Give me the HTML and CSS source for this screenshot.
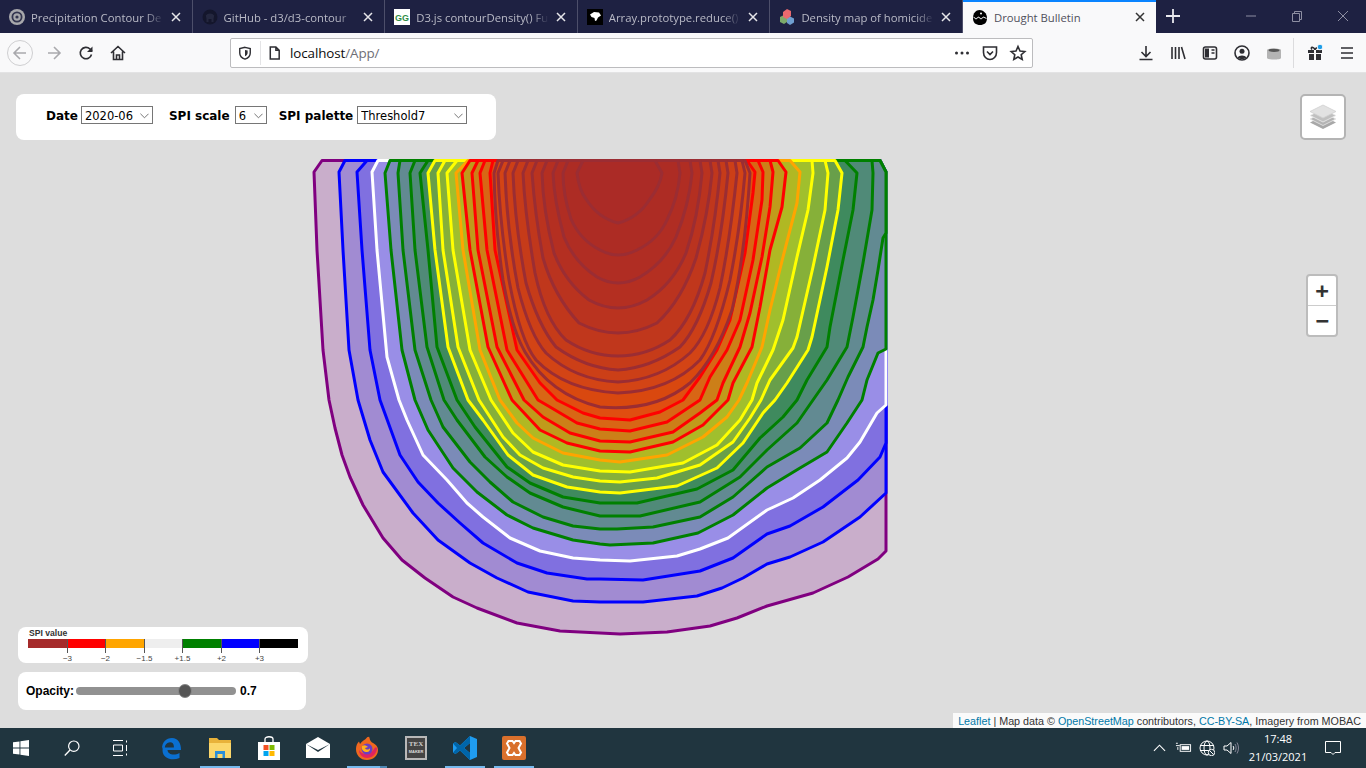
FILE: index.html
```html
<!DOCTYPE html>
<html lang="en">
<head>
<meta charset="utf-8">
<title>Drought Bulletin</title>
<link rel="stylesheet" href="styles.css">
</head>
<body>
<div class="tabstrip">
  <div class="tab">
    <svg class="fav" viewBox="0 0 16 16"><circle cx="8" cy="8" r="8" fill="#a8a8ac"/><circle cx="8" cy="8" r="4.6" fill="none" stroke="#33354f" stroke-width="1.8"/><circle cx="8" cy="8" r="1.6" fill="#33354f"/></svg>
    <span class="tab-title">Precipitation Contour De</span>
    <svg class="tab-x" viewBox="0 0 10 10"><path d="M1 1l8 8M9 1l-8 8"/></svg>
  </div>
  <div class="tab">
    <svg class="fav" viewBox="0 0 16 16"><circle cx="8" cy="8" r="7.5" fill="#14162c"/><path d="M4.5 13V10L3.800 6.500 5.500 5 8 4.500 10.500 5 12.200 6.500 11.500 10V13H9.500V10H6.500V13Z" fill="#24273f"/></svg>
    <span class="tab-title">GitHub - d3/d3-contour</span>
    <svg class="tab-x" viewBox="0 0 10 10"><path d="M1 1l8 8M9 1l-8 8"/></svg>
  </div>
  <div class="tab">
    <svg class="fav" viewBox="0 0 16 16"><rect width="16" height="16" fill="#fff"/><text x="8" y="11.500" text-anchor="middle" class="fav-gg">GG</text></svg>
    <span class="tab-title">D3.js contourDensity() Fu</span>
    <svg class="tab-x" viewBox="0 0 10 10"><path d="M1 1l8 8M9 1l-8 8"/></svg>
  </div>
  <div class="tab">
    <svg class="fav" viewBox="0 0 16 16"><rect width="16" height="16" fill="#000"/><path d="M3 5.500 7 3 12 3.500 14 6.500 11 8.500 9.500 11.500 8 12 7.500 9 4.500 8Z" fill="#fff"/></svg>
    <span class="tab-title">Array.prototype.reduce()</span>
    <svg class="tab-x" viewBox="0 0 10 10"><path d="M1 1l8 8M9 1l-8 8"/></svg>
  </div>
  <div class="tab">
    <svg class="fav" viewBox="0 0 16 16"><path d="M1 8l4-2 3 2v5l-3 2-4-2Z" fill="#7dab6a"/><path d="M8 9l3-1.500 4 2v4L11 16l-3-2Z" fill="#6f9fd0"/><path d="M4 3l4-3 4 2v5l-4 3-4-2Z" fill="#e96a6f"/></svg>
    <span class="tab-title">Density map of homicide</span>
    <svg class="tab-x" viewBox="0 0 10 10"><path d="M1 1l8 8M9 1l-8 8"/></svg>
  </div>
  <div class="tab tab-active">
    <svg class="fav" viewBox="0 0 16 16"><path d="M1 9C1 4 4 1 7.500 1S15 4 15 9 12 16 8 16 1 14 1 9Z" fill="#000"/><path d="M1.500 8.500 4 10.500 6.500 8.500 9 10.500 11.500 8.500 14.500 10 14.500 9 11.500 7.500 9 9.500 6.500 7.500 4 9.500 1.500 7.500Z" fill="#f9f9fa"/><circle cx="9" cy="4.500" r="1" fill="#fff"/></svg>
    <span class="tab-title">Drought Bulletin</span>
    <svg class="tab-x" viewBox="0 0 10 10"><path d="M1 1l8 8M9 1l-8 8"/></svg>
  </div>
  <svg class="newtab" viewBox="0 0 14 14"><path d="M7 0v14M0 7h14"/></svg>
  <div class="winctl">
    <svg class="winbtn" viewBox="0 0 46 12"><path d="M18 6h10"/></svg>
    <svg class="winbtn" viewBox="0 0 46 12"><path d="M18.500 3.500h7v8h-7ZM20.500 3.500V1.500h7v8h-2"/></svg>
    <svg class="winbtn" viewBox="0 0 46 12"><path d="M18 1l10 10M28 1L18 11"/></svg>
  </div>
</div>

<div class="navbar">
  <div class="nav-btn nav-back">
    <svg class="ic" viewBox="0 0 16 16"><path class="dim" d="M14 8H2M8 2 2 8l6 6"/></svg>
  </div>
  <div class="nav-btn nav-fwd">
    <svg class="ic" viewBox="0 0 16 16"><path class="dim" d="M2 8h12M8 2l6 6-6 6"/></svg>
  </div>
  <div class="nav-btn nav-reload">
    <svg class="ic" viewBox="0 0 16 16"><path d="M13.500 9.500A5.700 5.700 0 1 1 12 4L14 6"/><path class="solid" d="M14.500 1.500V7H9Z"/></svg>
  </div>
  <div class="nav-btn nav-home">
    <svg class="ic" viewBox="0 0 16 16"><path d="M1 8 8 1.500 15 8M3.500 6.500V14.500H12.500V6.500M6.500 14.500V10H9.500V14.500"/></svg>
  </div>
  <div class="urlbar">
    <svg class="ic url-shield" viewBox="0 0 16 16"><path d="M8 1.500 14 3V8C14 11.500 11 14 8 15 5 14 2 11.500 2 8V3Z"/><path class="solid" d="M8 4.500 11 5.200V8C11 9.800 9.500 11 8 11.800Z"/></svg>
    <span class="url-sep"></span>
    <svg class="ic url-page" viewBox="0 0 16 16"><path d="M3.500 1.500H9.500L13 5V14.500H3.500ZM9.500 1.500V5H13"/></svg>
    <span class="url-text">localhost<span class="url-dim">/App/</span></span>
    <div class="url-actions">
      <div class="url-act"><svg class="ic" viewBox="0 0 16 16"><circle class="solid" cx="2.500" cy="8" r="1.500"/><circle class="solid" cx="8" cy="8" r="1.500"/><circle class="solid" cx="13.500" cy="8" r="1.500"/></svg></div>
      <div class="url-act"><svg class="ic" viewBox="0 0 16 16"><path d="M1.500 2H14.500V7.500C14.500 11.500 11.500 14.500 8 14.500S1.500 11.500 1.500 7.500ZM5 6.500 8 9.500 11 6.500"/></svg></div>
      <div class="url-act"><svg class="ic" viewBox="0 0 16 16"><path d="M8 1.500 10 6 14.800 6.500 11.200 9.700 12.200 14.500 8 12 3.800 14.500 4.800 9.700 1.200 6.500 6 6Z"/></svg></div>
    </div>
  </div>
  <div class="nav-btn nav-dl"><svg class="ic" viewBox="0 0 16 16"><path d="M8 1v10M3.500 7 8 11.500 12.500 7M1.500 14.500h13"/></svg></div>
  <div class="nav-btn"><svg class="ic" viewBox="0 0 16 16"><path d="M2 2v12M5.500 2v12M9 2v12M11.500 2 15 14"/></svg></div>
  <div class="nav-btn"><svg class="ic" viewBox="0 0 16 16"><rect x="1.500" y="2" width="13" height="12" rx="2"/><path class="solid" d="M3 3.500H7V12.500H3Z"/><path d="M9.500 5h3M9.500 8h3"/></svg></div>
  <div class="nav-btn"><svg class="ic" viewBox="0 0 16 16"><circle cx="8" cy="8" r="7"/><circle class="solid" cx="8" cy="6.300" r="2.500"/><path class="solid" d="M3.500 12.500C5 9.800 11 9.800 12.500 12.500 10 14.500 6 14.500 3.500 12.500Z"/></svg></div>
  <div class="nav-btn"><svg class="ic-db" viewBox="0 0 16 16"><path d="M1 5C1 3 15 3 15 5V13C15 15 1 15 1 13Z" fill="#b4b4b4"/><ellipse cx="8" cy="5.300" rx="5.500" ry="1.600" fill="#555"/></svg></div>
  <span class="nav-sep"></span>
  <div class="nav-btn"><svg class="ic" viewBox="0 0 16 16"><path class="solid" d="M1 5H7V8H1ZM9 5H15V8H9ZM2 9H7V15H2ZM9 9H14V15H9Z"/><path d="M8 4.500C6 1 3 2 5 4.500M8 4.500C9 3 10 2.500 10.500 3"/><circle class="gift-dot" cx="13" cy="2" r="2.800"/></svg></div>
  <div class="nav-btn"><svg class="ic" viewBox="0 0 16 16"><path d="M2 3h12M2 8h12M2 13h12"/></svg></div>
</div>

<main class="map">
  <svg class="contours" viewBox="0 73 1366 655">
    <polygon class="c-purple" points="322,160.500 314,172 317,250 323,350 329,400 335,428 342,455 350,477 363,505 383,538 402,560 425,578 453,597 477,608 517,623 560,631 600,633 620,634 667,632 710,626 737,618 767,606 813,593 848,577 878,559 886,551 886,172 880,160.500"/>
    <polygon class="c-blue1" points="345,160.500 339,172 343,250 349,350 358,400 370,440 383,472 413,513 438,540 470,563 497,578 528,592 573,601 600,602 643,602 697,596 722,588 743,578 767,564 790,557 823,542 860,517 886,493 886,172 880,160.500"/>
    <polygon class="c-blue2" points="367,160.500 357,172 362,250 370,350 380,400 392,433 400,455 418,482 438,503 460,523 483,543 517,563 547,573 587,579 600,579 643,580 700,571 733,558 767,534 790,526 823,507 858,480 880,457 886,443 886,172 880,160.500"/>
    <polygon class="c-white" points="378,160.500 372,172 377,250 387,357 399,400 407,420 423,455 447,480 467,503 483,517 510,538 540,551 573,558 600,560 630,561 677,556 700,549 728,538 767,510 793,498 820,480 847,458 860,442 877,413 886,405 886,172 880,160.500"/>
    <polygon class="c-g1" points="390,160.500 385,173 391,250 402,350 415,400 428,430 453,468 477,492 507,515 533,528 573,540 600,544 610,545 653,543 698,533 733,515 767,488 800,468 827,452 847,423 862,400 867,380 878,353 886,349 886,172 880,160.500"/>
    <polygon class="c-g2" points="400,160.500 398,173 403,250 415,350 431,400 443,427 470,462 490,482 513,502 543,517 573,526 600,529 617,529 653,527 700,517 733,497 767,467 800,448 827,423 838,400 848,377 863,347 867,327 873,300 878,270 883,238 886,233 886,172 880,160.500"/>
    <polygon class="c-g3" points="415,160.500 410,173 415,250 427,347 444,400 457,420 485,457 507,477 530,493 563,507 600,516 640,516 700,502 740,477 767,450 797,423 813,400 827,380 847,347 853,317 863,263 872,210 873,173 872,160.500"/>
    <polygon class="c-g4" points="428,160.500 420,173 428,250 437,347 457,400 475,427 507,467 530,483 563,497 600,503 637,503 697,489 733,470 760,438 783,417 797,400 807,380 827,347 830,327 843,260 853,210 857,173 845,160.500"/>
    <polygon class="c-y1" points="435,160.500 428,173 435,250 448,347 468,400 483,420 508,455 533,475 567,487 600,492 620,493 677,486 717,468 743,443 763,413 775,400 787,383 808,350 812,337 827,267 838,210 842,173 835,160.500"/>
    <polygon class="c-y2" points="445,160.500 438,173 443,250 458,347 479,400 503,437 520,455 543,468 573,477 600,481 620,482 657,478 700,465 733,442 750,418 761,400 770,380 793,348 797,337 813,267 825,210 828,173 825,160.500"/>
    <polygon class="c-y3" points="457,160.500 447,173 453,250 470,350 491,400 513,433 533,452 563,465 600,471 630,472 683,463 717,445 740,420 752,400 757,383 773,350 783,320 797,257 808,210 813,173 812,160.500"/>
    <polygon class="c-o" points="468,160.500 456,173 463,250 480,350 500,400 517,423 533,438 563,453 600,460 620,462 667,455 703,437 727,417 739,400 747,383 762,347 770,310 783,257 797,203 800,172 790,160.500"/>
    <polygon class="c-r1" points="470,160.500 462,173 470,250 488,347 512,400 540,430 567,443 600,451 630,452 673,442 703,425 728,400 733,383 752,347 760,307 770,250 782,207 786,172 778,160.500"/>
    <polygon class="c-r2" points="478,160.500 472,173 478,250 497,347 524,400 543,417 570,433 600,441 630,442 673,432 700,413 717,400 723,383 740,347 750,313 762,257 770,207 773,172 770,160.500"/>
    <polygon class="c-r3" points="485,160.500 480,173 487,250 507,350 538,400 550,407 577,423 600,429 630,431 667,422 700,400 710,377 727,350 740,320 753,260 762,200 763,172 758,160.500"/>
    <polygon class="c-r4" points="493,160.500 490,173 495,250 517,350 540,383 557,400 583,413 600,418 630,420 660,412 683,400 700,377 717,350 730,320 745,253 753,193 755,172 747,160.500"/>
    <path class="c-b1" d="M498 160.500L494 173Q495 225 503 280Q512 330 525 352Q550 395 600 407Q655 412 690 383Q716 358 732 310Q745 255 750 173L745 160.500Z"/>
    <path class="c-b2" d="M503 160.500L498 173Q500 225 509 280Q520 340 536 360Q565 390 618 393Q670 391 700 360Q716 338 730 280Q740 230 745 173L742 160.500Z"/>
    <path class="c-b3" d="M510 160.500L505 173Q507 230 518 288Q530 335 546 353Q575 380 618 382Q660 380 690 353Q708 335 720 288Q730 240 737 173L735 160.500Z"/>
    <path class="c-b4" d="M518 160.500L513 173Q515 225 526 283Q538 325 556 347Q585 368 618 370Q650 368 680 347Q698 328 711 283Q722 235 728 173L726 160.500Z"/>
    <path class="c-b5" d="M528 160.500L523 173Q525 215 535 273Q545 320 566 340Q590 356 618 356Q646 356 670 340Q692 320 705 273Q715 225 720 173L718 160.500Z"/>
    <path class="c-b6" d="M537 160.500L532 173Q535 215 543 258Q554 296 579 323Q618 343 657 323Q682 300 696 258Q708 215 712 173L710 160.500Z"/>
    <path class="c-b7" d="M547 160.500L542 173Q543 210 554 253Q565 282 589 300Q618 316 647 300Q673 284 686 253Q698 218 702 173L700 160.500Z"/>
    <path class="c-b8" d="M558 160.500L553 173Q554 200 564 237Q574 262 597 277Q618 289 640 277Q665 262 676 237Q689 205 692 173L690 160.500Z"/>
    <path class="c-b9" d="M568 160.500L563 173Q563 195 571 219Q580 240 600 250Q618 260 637 250Q658 240 667 220Q678 198 680 173L678 160.500Z"/>
    <path class="c-b10" d="M583 160.500L577 173Q579 190 586 199Q598 218 618 223Q638 218 650 199Q660 186 662 173L655 160.500Z"/>
  </svg>

  <form class="filters">
    <label class="f-label f-date" for="f-date">Date</label>
    <span class="sel sel-date">
      <select id="f-date"><option>2020-06</option></select>
      <svg class="chev" viewBox="0 0 10 6"><path d="M.5.500 5 5 9.500.500"/></svg>
    </span>
    <label class="f-label f-scale" for="f-scale">SPI scale</label>
    <span class="sel sel-scale">
      <select id="f-scale"><option>6</option></select>
      <svg class="chev" viewBox="0 0 10 6"><path d="M.5.500 5 5 9.500.500"/></svg>
    </span>
    <label class="f-label f-palette" for="f-pal">SPI palette</label>
    <span class="sel sel-pal">
      <select id="f-pal"><option>Threshold7</option></select>
      <svg class="chev" viewBox="0 0 10 6"><path d="M.5.500 5 5 9.500.500"/></svg>
    </span>
  </form>

  <div class="layers">
    <svg class="layers-ic" viewBox="0 0 26 26">
      <path d="M13 12 26 18.500 13 25 0 18.500Z" fill="#a8a8a8"/>
      <path d="M13 8.500 26 15 13 21.500 0 15Z" fill="#b4b4b4" stroke="#e8e8e8" stroke-width=".8"/>
      <path d="M13 5 26 11.500 13 18 0 11.500Z" fill="#c0c0c0" stroke="#eee" stroke-width=".8"/>
      <path d="M13 1 26 7.500 13 14 0 7.500Z" fill="#e2e2e2" stroke="#d0d0d0" stroke-width=".8"/>
    </svg>
  </div>

  <div class="zoom">
    <a class="zoom-btn zoom-in">+</a>
    <a class="zoom-btn">−</a>
  </div>

  <div class="bottom-left">
    <div class="legend">
      <svg class="legend-svg" viewBox="0 0 290 36">
        <text class="leg-title" x="11" y="9">SPI value</text>
        <rect class="sw-brown" x="10" y="12" width="39" height="9"/>
        <rect class="sw-red" x="49" y="12" width="38" height="9"/>
        <rect class="sw-orange" x="87" y="12" width="39" height="9"/>
        <rect class="sw-grey" x="126" y="12" width="38" height="9"/>
        <rect class="sw-green" x="164" y="12" width="39" height="9"/>
        <rect class="sw-blue" x="203" y="12" width="38" height="9"/>
        <rect class="sw-black" x="241" y="12" width="39" height="9"/>
        <path class="leg-tick" d="M49.500 12v14M87.500 12v14M126.500 12v14M164.500 12v14M203.500 12v14M241.500 12v14"/>
        <text class="leg-lbl" x="49.500" y="34">−3</text>
        <text class="leg-lbl" x="87.500" y="34">−2</text>
        <text class="leg-lbl" x="126.500" y="34">−1.5</text>
        <text class="leg-lbl" x="164.500" y="34">+1.5</text>
        <text class="leg-lbl" x="203.500" y="34">+2</text>
        <text class="leg-lbl" x="241.500" y="34">+3</text>
      </svg>
    </div>
    <div class="opacity">
      <span class="op-label">Opacity:</span>
      <span class="slider"><span class="thumb"></span></span>
      <span class="op-val">0.7</span>
    </div>
  </div>

  <div class="attrib"><a>Leaflet</a> | Map data © <a>OpenStreetMap</a> contributors, <a>CC-BY-SA</a>, Imagery from MOBAC</div>
</main>

<footer class="taskbar">
  <div class="tb tb-start"><svg class="tb-ic" viewBox="0 0 16 16"><path d="M0 2.300 6.500 1.400V7.600H0ZM7.400 1.300 16 0V7.600H7.400ZM0 8.400H6.500V14.600L0 13.700ZM7.400 8.400H16V16L7.400 14.700Z" fill="#fff"/></svg></div>
  <div class="tb"><svg class="tb-ic" viewBox="0 0 16 16"><circle cx="9.800" cy="6.200" r="5.200" fill="none" stroke="#fff" stroke-width="1.200"/><path d="M6 10 .8 15.500" stroke="#fff" stroke-width="1.300"/></svg></div>
  <div class="tb"><svg class="tb-ic" viewBox="0 0 16 16"><path d="M1 .5h10M1 15.500h10M1.500 5h9v6h-9ZM14.500 .5v2M14.500 5v6M14.500 13.500v2" fill="none" stroke="#fff"/></svg></div>
  <div class="tb tb-app tb-edge"><svg class="tb-ic tb-big" viewBox="0 0 24 24"><path d="M3 13C3 6 7 2 13 2c6 0 9 5 9 12H8.500c.3 4.500 6.500 6 12 3v5c-7 3-17 1-17-8 0-3 2-5.500 5-7-2.500 2-2.500 3-2.700 4.500h9C15.500 7 12 5 8.500 7 6 8.500 4 10.500 3 13Z" fill="#0a6fd0"/></svg></div>
  <div class="tb tb-app tb-on"><svg class="tb-ic tb-big" viewBox="0 0 24 24"><path d="M1 2H9L11 4H23V22H1Z" fill="#e8b23a"/><path d="M1 7H23V22H1Z" fill="#fbd76b"/><path d="M7 15H17V22H14.500V18H9.500V22H7Z" fill="#2b8fd8"/></svg></div>
  <div class="tb tb-app"><svg class="tb-ic tb-big" viewBox="0 0 24 24"><path d="M1 6H23V24H1Z" fill="#fff"/><path d="M8 7V3C8 0 16 0 16 3V7" fill="none" stroke="#fff" stroke-width="1.300"/><rect x="6.500" y="9" width="5" height="5" fill="#f25022"/><rect x="12.500" y="9" width="5" height="5" fill="#7fba00"/><rect x="6.500" y="15" width="5" height="5" fill="#00a4ef"/><rect x="12.500" y="15" width="5" height="5" fill="#ffb900"/></svg></div>
  <div class="tb tb-app"><svg class="tb-ic tb-big" viewBox="0 0 24 24"><path d="M0 8 12 1 24 8V22H0Z" fill="#fff"/><path d="M0 8 12 14 24 8 12 16 Z" fill="#20353f"/></svg></div>
  <div class="tb tb-app tb-on tb-on2"><svg class="tb-ic tb-big" viewBox="0 0 24 24"><path d="M12 24C5 24 1 19 1 13 1 10 2 7 4 5.500L5 8C7 5 10 4 12 1.500c.5-1 1.500 0 2-1 1 2 .5 4 3 6C20 8 23 10 23 14c0 6-5 10-11 10Z" fill="#f0681f"/><path d="M12 22C7 22 4 18 4 14c3 5 11 6 15-1 .5-1 1.500-2 3-1 0 6-5 10-10 10Z" fill="#e0245e"/><circle cx="12" cy="13" r="5.500" fill="#6b3fc0"/><path d="M7 10c3-2 5 0 6 1l-3 1c1 2 4 2 5 0 .5 2-1 4-3 4-3 0-6-2-5-6Z" fill="#ffb11a"/></svg></div>
  <div class="tb tb-app"><svg class="tb-ic tb-big" viewBox="0 0 24 24"><rect x="1" y="0" width="22" height="24" fill="#b8b8b8"/><rect x="3" y="2" width="18" height="20" fill="#444"/><text class="tex-a" x="12" y="10" text-anchor="middle">TEX</text><text class="tex-b" x="12" y="17" text-anchor="middle">MAKER</text></svg></div>
  <div class="tb tb-app tb-on"><svg class="tb-ic tb-big" viewBox="0 0 24 24"><path d="M17 0 24 3V21L17 24 7 14.500 2.500 18 0 16.500V7.500L2.500 6 7 9.500ZM17 7 11 12l6 5Z" fill="#1f9cf0"/><path d="M17 0V7L11 12 17 17V24L7 14.500 2.500 18 0 16.500 4 12 0 7.500 2.500 6 7 9.500Z" fill="#0065a9"/></svg></div>
  <div class="tb tb-app tb-on"><svg class="tb-ic tb-big" viewBox="0 0 24 24"><rect width="24" height="24" rx="2" fill="#d9702c"/><path d="M6.500 5H10.500L12 7 13.500 5H17.500L19 7.500 16.500 12 19 16.500 17.500 19H13.500L12 17 10.500 19H6.500L5 16.500 7.500 12 5 7.500Z" fill="none" stroke="#fff" stroke-width="2"/></svg></div>
  <div class="tray">
    <div class="tr"><svg class="tr-ic" viewBox="0 0 14 8"><path d="M1 7 7 1l6 6" fill="none" stroke="#fff" stroke-width="1.200"/></svg></div>
    <div class="tr"><svg class="tr-ic tr-wide" viewBox="0 0 18 12"><path d="M1 1H3M1 3.500H5M3 5V8" stroke="#fff" fill="none"/><rect x="5.500" y="2.500" width="11" height="7" fill="none" stroke="#fff"/><rect x="7" y="4" width="8" height="4" fill="#fff"/></svg></div>
    <div class="tr"><svg class="tr-ic tr-globe" viewBox="0 0 16 16"><circle cx="8" cy="8" r="7" fill="none" stroke="#fff"/><ellipse cx="8" cy="8" rx="3" ry="7" fill="none" stroke="#fff"/><path d="M1 5.500H15M1 10.500H15" stroke="#fff"/><circle cx="12.500" cy="12.500" r="3.200" fill="#20353f" stroke="#fff"/><path d="M10.500 10.500l4 4" stroke="#fff"/></svg></div>
    <div class="tr"><svg class="tr-ic tr-globe" viewBox="0 0 16 16"><path d="M1 6H4L8 2.500V13.500L4 10H1Z" fill="none" stroke="#fff"/><path d="M10 6C11 7 11 9 10 10" fill="none" stroke="#fff"/><path d="M12 4C13.500 6 13.500 10 12 12M14 2.500C16 6 16 10 14 13.500" fill="none" stroke="#889"/></svg></div>
    <div class="clock"><span>17:48</span><span>21/03/2021</span></div>
    <div class="notif"><svg class="tr-ic tr-notif" viewBox="0 0 16 15"><path d="M.5.500H15.500V11.500H10L8 13.500 6 11.500H.5Z" fill="none" stroke="#fff"/></svg></div>
  </div>
</footer>
</body>
</html>
```

FILE: styles.css
```css
* { box-sizing: border-box; }
html, body { margin: 0; height: 100%; }
body { width: 1366px; height: 768px; overflow: hidden; display: flex; flex-direction: column; font-family: "Open Sans", sans-serif; background: #ddd; }

/* tab strip */
.tabstrip { height: 33px; flex: none; display: flex; align-items: stretch; background: #1e2142; }
.tab { width: 192.6px; display: flex; align-items: center; padding: 0 11px 0 9px; border-right: 1px solid #4d4f6a; color: #b9bac6; font-size: 11.3px; position: relative; }
.fav { width: 16px; height: 16px; flex: none; margin-right: 6px; }
.fav-gg { font: bold 9px "Liberation Sans", sans-serif; fill: #2f8d46; }
.tab-title { flex: 1; overflow: hidden; white-space: nowrap; min-width: 0; padding-top: 1px; -webkit-mask-image: linear-gradient(to right, #000 86%, transparent); mask-image: linear-gradient(to right, #000 86%, transparent); }
.tab-x { width: 10px; height: 10px; flex: none; margin-left: 7px; fill: none; stroke: #e6e6ea; stroke-width: 1.5; }
.tab-active { background: #f9f9fa; color: #50505c; border-right: 0; border-top: 2px solid #0a84ff; padding-bottom: 2px; }
.tab-active .tab-title { -webkit-mask-image: none; mask-image: none; }
.tab-active .tab-x { stroke: #333; }
.newtab { width: 14px; height: 14px; margin: 9px 0 0 10px; fill: none; stroke: #e8e8ee; stroke-width: 1.8; }
.winctl { margin-left: auto; display: flex; align-items: center; }
.winbtn { width: 46px; height: 12px; fill: none; stroke: #8d8ea2; stroke-width: 1; margin-bottom: 2px; }

/* nav bar */
.navbar { height: 40px; flex: none; display: flex; align-items: center; background: #f9f9fa; border-bottom: 1px solid #e3e3e4; padding-left: 4px; }
.nav-btn { width: 32px; height: 32px; flex: none; display: flex; align-items: center; justify-content: center; }
.nav-back { border: 1px solid #cfcfd1; border-radius: 50%; width: 26px; height: 26px; margin: 0 3px 0 3px; }
.nav-fwd { width: 36px; }
.nav-reload { width: 28px; }
.nav-home { width: 36px; }
.ic { width: 16px; height: 16px; fill: none; stroke: #2e2e33; stroke-width: 1.600; overflow: visible; }
.ic .dim { stroke: #a9a9ad; }
.ic .solid { fill: #2e2e33; stroke: none; }
.ic .gift-dot { fill: #1e9ee8; stroke: #f9f9fa; stroke-width: 1; }
.ic-db { width: 16px; height: 16px; }
.urlbar { width: 803px; height: 30px; margin-left: 94px; flex: none; display: flex; align-items: center; background: #fff; border: 1px solid #bcbcbe; border-radius: 2px; padding-left: 7px; }
.url-shield { width: 14px; height: 14px; }
.url-sep { width: 1px; height: 24px; background: #e4e4e6; margin: 0 6px 0 8px; }
.url-page { width: 15px; height: 16px; }
.url-text { margin-left: 8px; font-size: 13.4px; color: #0c0c0d; letter-spacing: -.1px; }
.url-dim { color: #6e6e75; }
.url-actions { margin-left: auto; display: flex; }
.url-act { width: 28px; display: flex; justify-content: center; align-items: center; }
.nav-dl { margin-left: 97px; }
.nav-sep { width: 1px; height: 30px; background: #dcdcde; margin: 0 5px 0 3px; flex: none; }

/* map */
.map { flex: 1; position: relative; background: #ddd; overflow: hidden; }
.contours { position: absolute; left: 0; top: 0; width: 1366px; height: 655px; }
.contours polygon, .contours path { stroke-width: 3; stroke-linejoin: round; }
.c-purple { fill: #c9aecb; stroke: #800080; }
.c-blue1 { fill: #a18bd2; stroke: #0000ff; }
.c-blue2 { fill: #8070e0; stroke: #0000ff; }
.c-white { fill: #998ee7; stroke: #fff; }
.c-g1 { fill: #7b8bb8; stroke: #008000; }
.c-g2 { fill: #628a92; stroke: #008000; }
.c-g3 { fill: #508a78; stroke: #008000; }
.c-g4 { fill: #3f8a5e; stroke: #008000; }
.c-y1 { fill: #689f4a; stroke: #ffff00; }
.c-y2 { fill: #86b039; stroke: #ffff00; }
.c-y3 { fill: #a0bf2d; stroke: #ffff00; }
.c-o { fill: #b0b823; stroke: #ffa500; }
.c-r1 { fill: #c09a1b; stroke: #ff0000; }
.c-r2 { fill: #cc7f18; stroke: #ff0000; }
.c-r3 { fill: #d86615; stroke: #ff0000; }
.c-r4 { fill: #e04e10; stroke: #ff0000; }
.c-b1, .c-b2, .c-b3, .c-b4, .c-b5, .c-b6, .c-b7, .c-b8, .c-b9, .c-b10 { stroke: #9b2d33; }
.c-b1 { fill: #d9480f; }
.c-b2 { fill: #d34415; }
.c-b3 { fill: #cc3f17; }
.c-b4 { fill: #c63b19; }
.c-b5 { fill: #c0371c; }
.c-b6 { fill: #ba331f; }
.c-b7 { fill: #b42f21; }
.c-b8 { fill: #b02d23; }
.c-b9 { fill: #ad2c24; }
.c-b10 { fill: #ab2b26; }

/* filter panel */
.filters { position: absolute; left: 16px; top: 21px; width: 480px; height: 46px; background: #fff; border-radius: 8px; display: flex; align-items: center; padding: 0 0 4px 30px; }
.f-label { font: bold 12px "DejaVu Sans", sans-serif; color: #000; margin-right: 4px; padding-top: 2px; }
.f-date { margin-right: 3px; }
.f-scale { margin-left: 16px; margin-right: 5px; }
.f-palette { margin-left: 12px; }
.sel { position: relative; display: block; height: 18px; }
.sel select { appearance: none; -webkit-appearance: none; display: block; width: 100%; height: 18px; border: 1px solid #767676; border-radius: 0; background: #fff; font: 11.5px "DejaVu Sans", sans-serif; color: #000; padding: 1px 0 0 3px; margin: 0; }
.sel-date { width: 72px; }
.sel-scale { width: 32px; }
.sel-pal { width: 110px; }
.chev { position: absolute; right: 4px; top: 7px; width: 9px; height: 6px; fill: none; stroke: #666; stroke-width: 1; pointer-events: none; }

/* leaflet controls */
.layers { position: absolute; left: 1300px; top: 21px; width: 46px; height: 46px; background: #fff; border: 2px solid #b4b4b4; border-radius: 5px; display: flex; align-items: center; justify-content: center; }
.layers-ic { width: 26px; height: 26px; }
.zoom { position: absolute; left: 1306px; top: 201px; width: 32px; height: 63px; background: #fff; border: 2px solid #bcbcbc; border-radius: 4px; display: flex; flex-direction: column; }
.zoom-btn { flex: 1; display: flex; align-items: center; justify-content: center; font: bold 22px "DejaVu Sans Mono", monospace; color: #333; }
.zoom-in { border-bottom: 1px solid #ccc; }

/* bottom left */
.bottom-left { position: absolute; left: 18px; bottom: 18px; display: flex; flex-direction: column; gap: 9px; }
.legend { width: 290px; height: 36px; background: #fff; border-radius: 8px; }
.legend-svg { display: block; width: 290px; height: 36px; }
.leg-title { font: bold 8.6px "Liberation Sans", sans-serif; fill: #333; }
.leg-lbl { font: 8px "Liberation Sans", sans-serif; fill: #444; text-anchor: middle; }
.leg-tick { stroke: #555; stroke-width: 1; fill: none; }
.sw-brown { fill: #a52a2a; }
.sw-red { fill: #ff0000; }
.sw-orange { fill: #ffa500; }
.sw-grey { fill: #eeeeee; }
.sw-green { fill: #008000; }
.sw-blue { fill: #0000ff; }
.sw-black { fill: #000; }
.opacity { width: 288px; height: 38px; background: #fff; border-radius: 8px; display: flex; align-items: center; padding-left: 8px; font: bold 12px "Liberation Sans", sans-serif; color: #000; }
.slider { width: 160px; height: 8px; margin: 0 4px 0 3px; background: #919191; border-radius: 4px; position: relative; }
.op-label { width: 47px; }
.thumb { position: absolute; left: 102px; top: -3px; width: 14px; height: 14px; border-radius: 50%; background: #555; border: 1px solid #888; }
.attrib { position: absolute; right: 0; bottom: 0; height: 15px; padding: 1px 5px 0 5px; background: rgba(255,255,255,.85); font: 10.75px/15px "Liberation Sans", sans-serif; color: #333; white-space: nowrap; }
.attrib a { color: #0078a8; }

/* taskbar */
.taskbar { height: 40px; flex: none; display: flex; align-items: stretch; background: #20353f; color: #fff; }
.tb { width: 48px; flex: none; display: flex; align-items: center; justify-content: center; position: relative; }
.tb-start { width: 42px; margin-right: 6px; }
.tb-app { width: 49px; }
.tb-edge { margin-left: 2.5px; }
.tb-ic { width: 16px; height: 16px; }
.tb-big { width: 24px; height: 24px; }
.tb-on::after { content: ""; position: absolute; left: 4px; right: 5px; bottom: 0; height: 2px; background: #76b9ed; }
.tb-on2::after { background: linear-gradient(to right, #76b9ed 82%, #4d87b3 82%); }
.tex-a { font: bold 7px "Liberation Serif", serif; fill: #ccc; }
.tex-b { font: bold 4px "Liberation Sans", sans-serif; fill: #ddd; }
.tray { margin-left: auto; display: flex; align-items: center; padding-right: 13px; }
.tr { width: 24px; display: flex; justify-content: center; }
.tr-ic { width: 13px; height: 8px; }
.tr-wide { width: 17px; height: 12px; }
.tr-globe { width: 16px; height: 16px; }
.clock { width: 70px; display: flex; flex-direction: column; align-items: center; font-size: 11px; line-height: 18px; }
.notif { width: 40px; display: flex; justify-content: center; }
.tr-notif { width: 16px; height: 15px; }
```
